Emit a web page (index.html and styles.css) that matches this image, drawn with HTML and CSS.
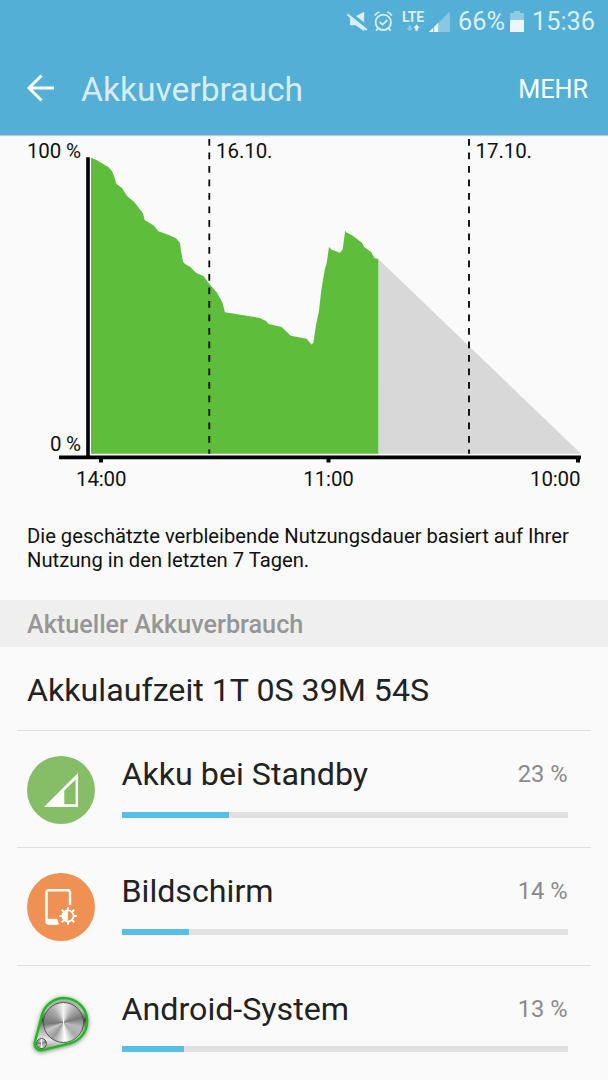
FILE: index.html
```html
<!DOCTYPE html>
<html lang="de">
  <head>
    <meta charset="UTF-8" />
    <meta name="viewport" content="width=device-width, initial-scale=1.0" />
    <title>Akkuverbrauch</title>
    <link rel="stylesheet" href="styles.css">
  </head>
  <body>
    <header class="header">
      <div class="status-bar">
        <svg class="status-icons" width="108" height="26" viewBox="344 8 108 26">
          <!-- Ton aus -->
          <path d="M364.200 10.700v10.800l-8.200-6.400z" fill="#d9eef7" />
          <path d="M350 16l14.200 11.500v2.800l-8.700-6H350z" fill="#d9eef7" />
          <path d="M347.500 13.500l19.300 15.500" stroke="#d9eef7" stroke-width="2.200" />
          <!-- Wecker -->
          <g fill="none" stroke="#d9eef7" stroke-width="1.800">
            <circle cx="383.300" cy="21.300" r="7.700" />
            <path d="M379.600 20.800l3 2.800 4.800-4.600" />
            <path d="M374.900 14.600q1.300-2.800 4.400-3.600M391.700 14.600q-1.300-2.800-4.400-3.600M378 27.200l-2 2.600M388.600 27.200l2 2.600" />
          </g>
          <text class="lte" x="402" y="20.600" textLength="22">LTE</text>
          <path d="M408.500 24.500h2.400v2.500h2l-3.200 3.200-3.200-3.200h2z" fill="#8fcbe4" />
          <path d="M415.300 29.700h2.600v-2.600h1.900l-3.200-3.600-3.200 3.600h1.900z" fill="#e8f5fa" />
          <!-- Signal -->
          <path d="M429 31l20.800-20.500v20.500z" fill="#8ac8e2" />
          <path d="M429 31l4-4v4zM434.300 31v-5.300l3.900-3.900v9.200z" fill="#eef8fc" />
        </svg>
        <span class="status-percent">66%</span>
        <svg class="battery" width="14" height="22" viewBox="0 0 14 22">
          <path d="M0 2h4V0h6v2h4v7H0z" fill="#8fcbe4" />
          <path d="M0 9h14v12H0z" fill="#eaf6fb" />
        </svg>
        <span class="status-time">15:36</span>
      </div>
      <div class="title-bar">
        <svg class="back" width="28" height="28" viewBox="0 0 28 28">
          <path d="M14.500 1.500L2 14l12.500 12.500M2.500 14H27" fill="none" stroke="#fff" stroke-width="3" />
        </svg>
        <h1>Akkuverbrauch</h1>
        <span class="more">MEHR</span>
      </div>
    </header>

    <svg class="chart" width="608" height="365" viewBox="0 135 608 365">
      <path d="M378.3 259L581 453.8H378.3z" fill="#d8d8d8" />
      <path fill="#5fbd3c" d="M91 453.8V157.7L96 159.7 108.3 167 112 171.3 114.3 176.7 116.3 183.7 121.7 187.7 127.3 196.3 134 201.7 138.3 207.3 143 213.3 144.7 220 154 225.7 158.3 231.3 168.3 234.7 176 238.3 180 243 181 250.7 183 261.7 185 264 190.3 267 196 272.7 203.7 276.3 209.3 284 216.7 292.3 222.3 302.3 225 312.2 260 318 266 321 268.7 324 281.7 327 290.7 335.7 306.7 338.7 311.3 344.5 313.3 343 316 325 319 310.7 321.3 290 324.7 270 326.7 263 329 247 331.7 249.7 340 252.7 342.7 249.3 345.3 230 346 232.3 351.7 235 362 242.7 364 246.7 371.3 252.3 374.7 258.3 378.3 259V453.8z" />
      <path class="day" d="M209.3 139V453.8M469 139V453.8" />
      <path d="M86.2 157.3h3.6v298.4h-3.6zM59 455.6h522v3.6H59zM99 459h4v3.4h-4zM326.5 459h4v3.4h-4zM576 459h4v3.4h-4z" />
      <text x="27" y="157.6" textLength="54">100 %</text>
      <text x="50" y="450.7" textLength="31">0 %</text>
      <text x="216" y="157.6" textLength="56.5">16.10.</text>
      <text x="475.5" y="157.6" textLength="56.5">17.10.</text>
      <text x="76" y="485.9" textLength="50.5">14:00</text>
      <text x="303.3" y="485.9" textLength="50.5">11:00</text>
      <text x="530" y="485.9" textLength="50.5">10:00</text>
    </svg>

    <p class="hint">Die geschätzte verbleibende Nutzungsdauer basiert auf Ihrer<br>Nutzung in den letzten 7 Tagen.</p>

    <h2 class="section">Aktueller Akkuverbrauch</h2>

    <div class="runtime">Akkulaufzeit 1T 0S 39M 54S</div>

    <ul class="list">
      <li class="item">
        <svg class="icon" width="68" height="68" viewBox="0 0 68 68">
          <circle cx="34" cy="34" r="34" fill="#86bd67" />
          <path d="M17 51L51 17v34z" fill="#fff" />
          <path d="M37.3 34.7L48.6 23.6V48.2H37.3z" fill="#86bd67" />
        </svg>
        <div class="usage">
          <div class="row"><span class="name">Akku bei Standby</span><span class="percent">23 %</span></div>
          <div class="bar"><div class="fill" style="width: 24.1%"></div></div>
        </div>
      </li>
      <li class="item">
        <svg class="icon" width="68" height="68" viewBox="0 0 68 68">
          <circle cx="34" cy="34" r="34" fill="#ef9152" />
          <path d="M43 32V19.5q0-2.3-2.3-2.3H21.8q-2.3 0-2.3 2.3V48.3q0 2.2 2.3 2.2H30" fill="none" stroke="#fff" stroke-width="2.4" />
          <path d="M19.5 45.7H30l2 5.8H21.5q-2 0-2-2z" fill="#fff" />
          <path d="M41 34.3v17.5M32.3 43h17.4M34.8 36.8l12.4 12.4M47.2 36.8L34.8 49.2" stroke="#fff" stroke-width="2" />
          <circle cx="41" cy="43" r="5.6" fill="#ef9152" stroke="#fff" stroke-width="1.8" />
          <path d="M41 37.4a5.6 5.6 0 0 0 0 11.2z" fill="#fff" />
        </svg>
        <div class="usage">
          <div class="row"><span class="name">Bildschirm</span><span class="percent">14 %</span></div>
          <div class="bar"><div class="fill" style="width: 15.1%"></div></div>
        </div>
      </li>
      <li class="item">
        <div class="icon knob">
          <svg width="68" height="68" viewBox="0 0 68 68">
            <defs>
              <linearGradient id="plate" x1="0" y1="0" x2="0" y2="1">
                <stop offset="0" stop-color="#aaa" />
                <stop offset="0.25" stop-color="#bbb" />
                <stop offset="0.42" stop-color="#444" />
                <stop offset="0.55" stop-color="#999" />
                <stop offset="0.8" stop-color="#e8e8e8" />
                <stop offset="1" stop-color="#888" />
              </linearGradient>
            </defs>
            <path d="M14.900 24.200A23 23 0 1 1 42.800 52.300L15.500 59.100A6.300 6.300 0 0 1 7.900 51.400z" fill="url(#plate)" stroke="#12c412" stroke-width="2.400" />
          </svg>
          <span class="disc big"></span>
          <span class="disc small"></span>
        </div>
        <div class="usage">
          <div class="row"><span class="name">Android-System</span><span class="percent">13 %</span></div>
          <div class="bar"><div class="fill" style="width: 14%"></div></div>
        </div>
      </li>
    </ul>
  </body>
</html>
```

FILE: styles.css
```css
* {
  margin: 0;
  padding: 0;
  box-sizing: border-box;
}

body {
  width: 608px;
  height: 1080px;
  overflow: hidden;
  font-family: Roboto, sans-serif;
  background-color: #fafafa;
  color: #222;
}

svg {
  display: block;
  flex-shrink: 0;
}

.header {
  height: 135px;
  background-color: #53afd6;
  box-shadow: 0 1px 1px rgba(0, 0, 0, 0.2);
}

.status-bar {
  display: flex;
  align-items: center;
  height: 43px;
  padding-left: 344px;
  font-size: 25.3px;
  color: #dceff7;
}

.status-percent {
  width: 52px;
  margin-left: 6px;
}

.status-time {
  margin-left: 8px;
}

.lte {
  font-size: 14px;
  font-weight: bold;
  fill: #d9eef7;
}

.title-bar {
  display: flex;
  align-items: center;
  height: 92px;
  padding: 0 20px 0 27px;
}

.title-bar h1 {
  flex: 1;
  margin-left: 26px;
  font-size: 33.6px;
  font-weight: 400;
  color: #d7edf6;
}

.back {
  margin-top: -2px;
}

.more {
  font-size: 25.2px;
  color: #fff;
}

.chart text {
  font-size: 20.5px;
  fill: #111;
}

.day {
  fill: none;
  stroke: #000;
  stroke-width: 1.8;
  stroke-dasharray: 6.8 6.7;
}

.hint {
  height: 100px;
  padding: 23.5px 27px 0;
  font-size: 20.2px;
  line-height: 24.2px;
  white-space: nowrap;
  color: #111;
}

.section {
  height: 47px;
  padding-left: 27px;
  font-size: 25.2px;
  font-weight: 500;
  line-height: 49px;
  background-color: #efefef;
  color: #969696;
}

.runtime {
  height: 84px;
  margin: 0 17px;
  padding-left: 10px;
  font-size: 32.2px;
  line-height: 87px;
  border-bottom: 1px solid #dedede;
}

.list {
  margin: 0 17px;
  list-style: none;
}

.item {
  display: flex;
  height: 117.3px;
  padding: 25px 23.5px 0 10px;
  border-bottom: 1px solid #dedede;
}

.usage {
  flex: 1;
  margin-left: 26.5px;
}

.row {
  display: flex;
  justify-content: space-between;
  height: 55.5px;
  line-height: 36.5px;
}

.name {
  font-size: 32.2px;
}

.percent {
  font-size: 23.7px;
  color: #8a8a8a;
}

.bar {
  height: 6px;
  background-color: #e1e1e1;
}

.fill {
  height: 6px;
  background-color: #57bfe6;
}

.knob {
  position: relative;
  width: 68px;
  height: 68px;
  filter: drop-shadow(0 1px 2px rgba(0, 0, 0, 0.5));
}

.disc {
  position: absolute;
  border: 1px solid #555;
  border-radius: 50%;
  background: conic-gradient(#f4f4f4, #aaa 40deg, #777 75deg, #bbb 105deg, #aaa 140deg, #fff 175deg, #999 215deg, #c8c8c8 245deg, #777 265deg, #aaa 320deg, #f4f4f4);
}

.big {
  left: 16px;
  top: 11px;
  width: 41px;
  height: 41px;
}

.small {
  left: 8.5px;
  top: 47.5px;
  width: 11px;
  height: 11px;
}
```
